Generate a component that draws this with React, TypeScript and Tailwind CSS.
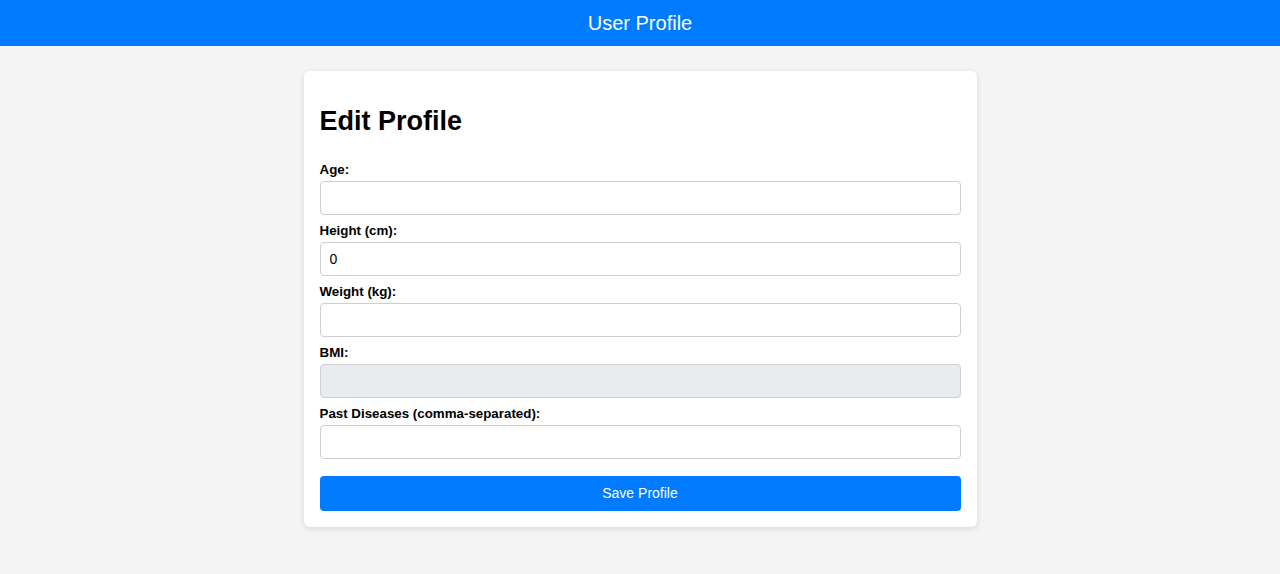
import React from "react";

const fields = [
  { label: "Age:", value: "" },
  { label: "Height (cm):", value: "0" },
  { label: "Weight (kg):", value: "" },
  { label: "BMI:", value: "", disabled: true },
  { label: "Past Diseases (comma-separated):", value: "" },
];

export default function App() {
  return (
    <div className="min-h-[574px] bg-[#f4f4f4] font-['Liberation_Sans',Arial,sans-serif] text-black">
      {/* Header */}
      <header className="h-[46px] bg-[#007bff] flex items-center justify-center">
        <h1 className="text-[20px] text-white font-normal">User Profile</h1>
      </header>

      {/* Card */}
      <div className="flex justify-center pt-[25px]">
        <div className="w-[673px] bg-white rounded-[6px] shadow-[0_2px_6px_rgba(0,0,0,0.12)] p-4">
          <h2 className="text-[27px] font-bold leading-7 mt-5 mb-[26px]">Edit Profile</h2>

          {fields.map((f) => (
            <div key={f.label} className="mb-[7px]">
              <label className="block text-[13.33px] font-bold leading-4 pt-px mb-[3px]">{f.label}</label>
              <input
                defaultValue={f.value}
                disabled={f.disabled}
                className={`block w-full h-[34px] border border-[#cfcfcf] rounded-[4px] px-[9px] text-[14px] outline-none ${
                  f.disabled ? "bg-[#e9ecef]" : "bg-white"
                }`}
              />
            </div>
          ))}

          <button className="mt-[10px] w-full h-[35px] rounded-[4px] bg-[#007bff] text-white text-[14px]">
            Save Profile
          </button>
        </div>
      </div>
    </div>
  );
}
